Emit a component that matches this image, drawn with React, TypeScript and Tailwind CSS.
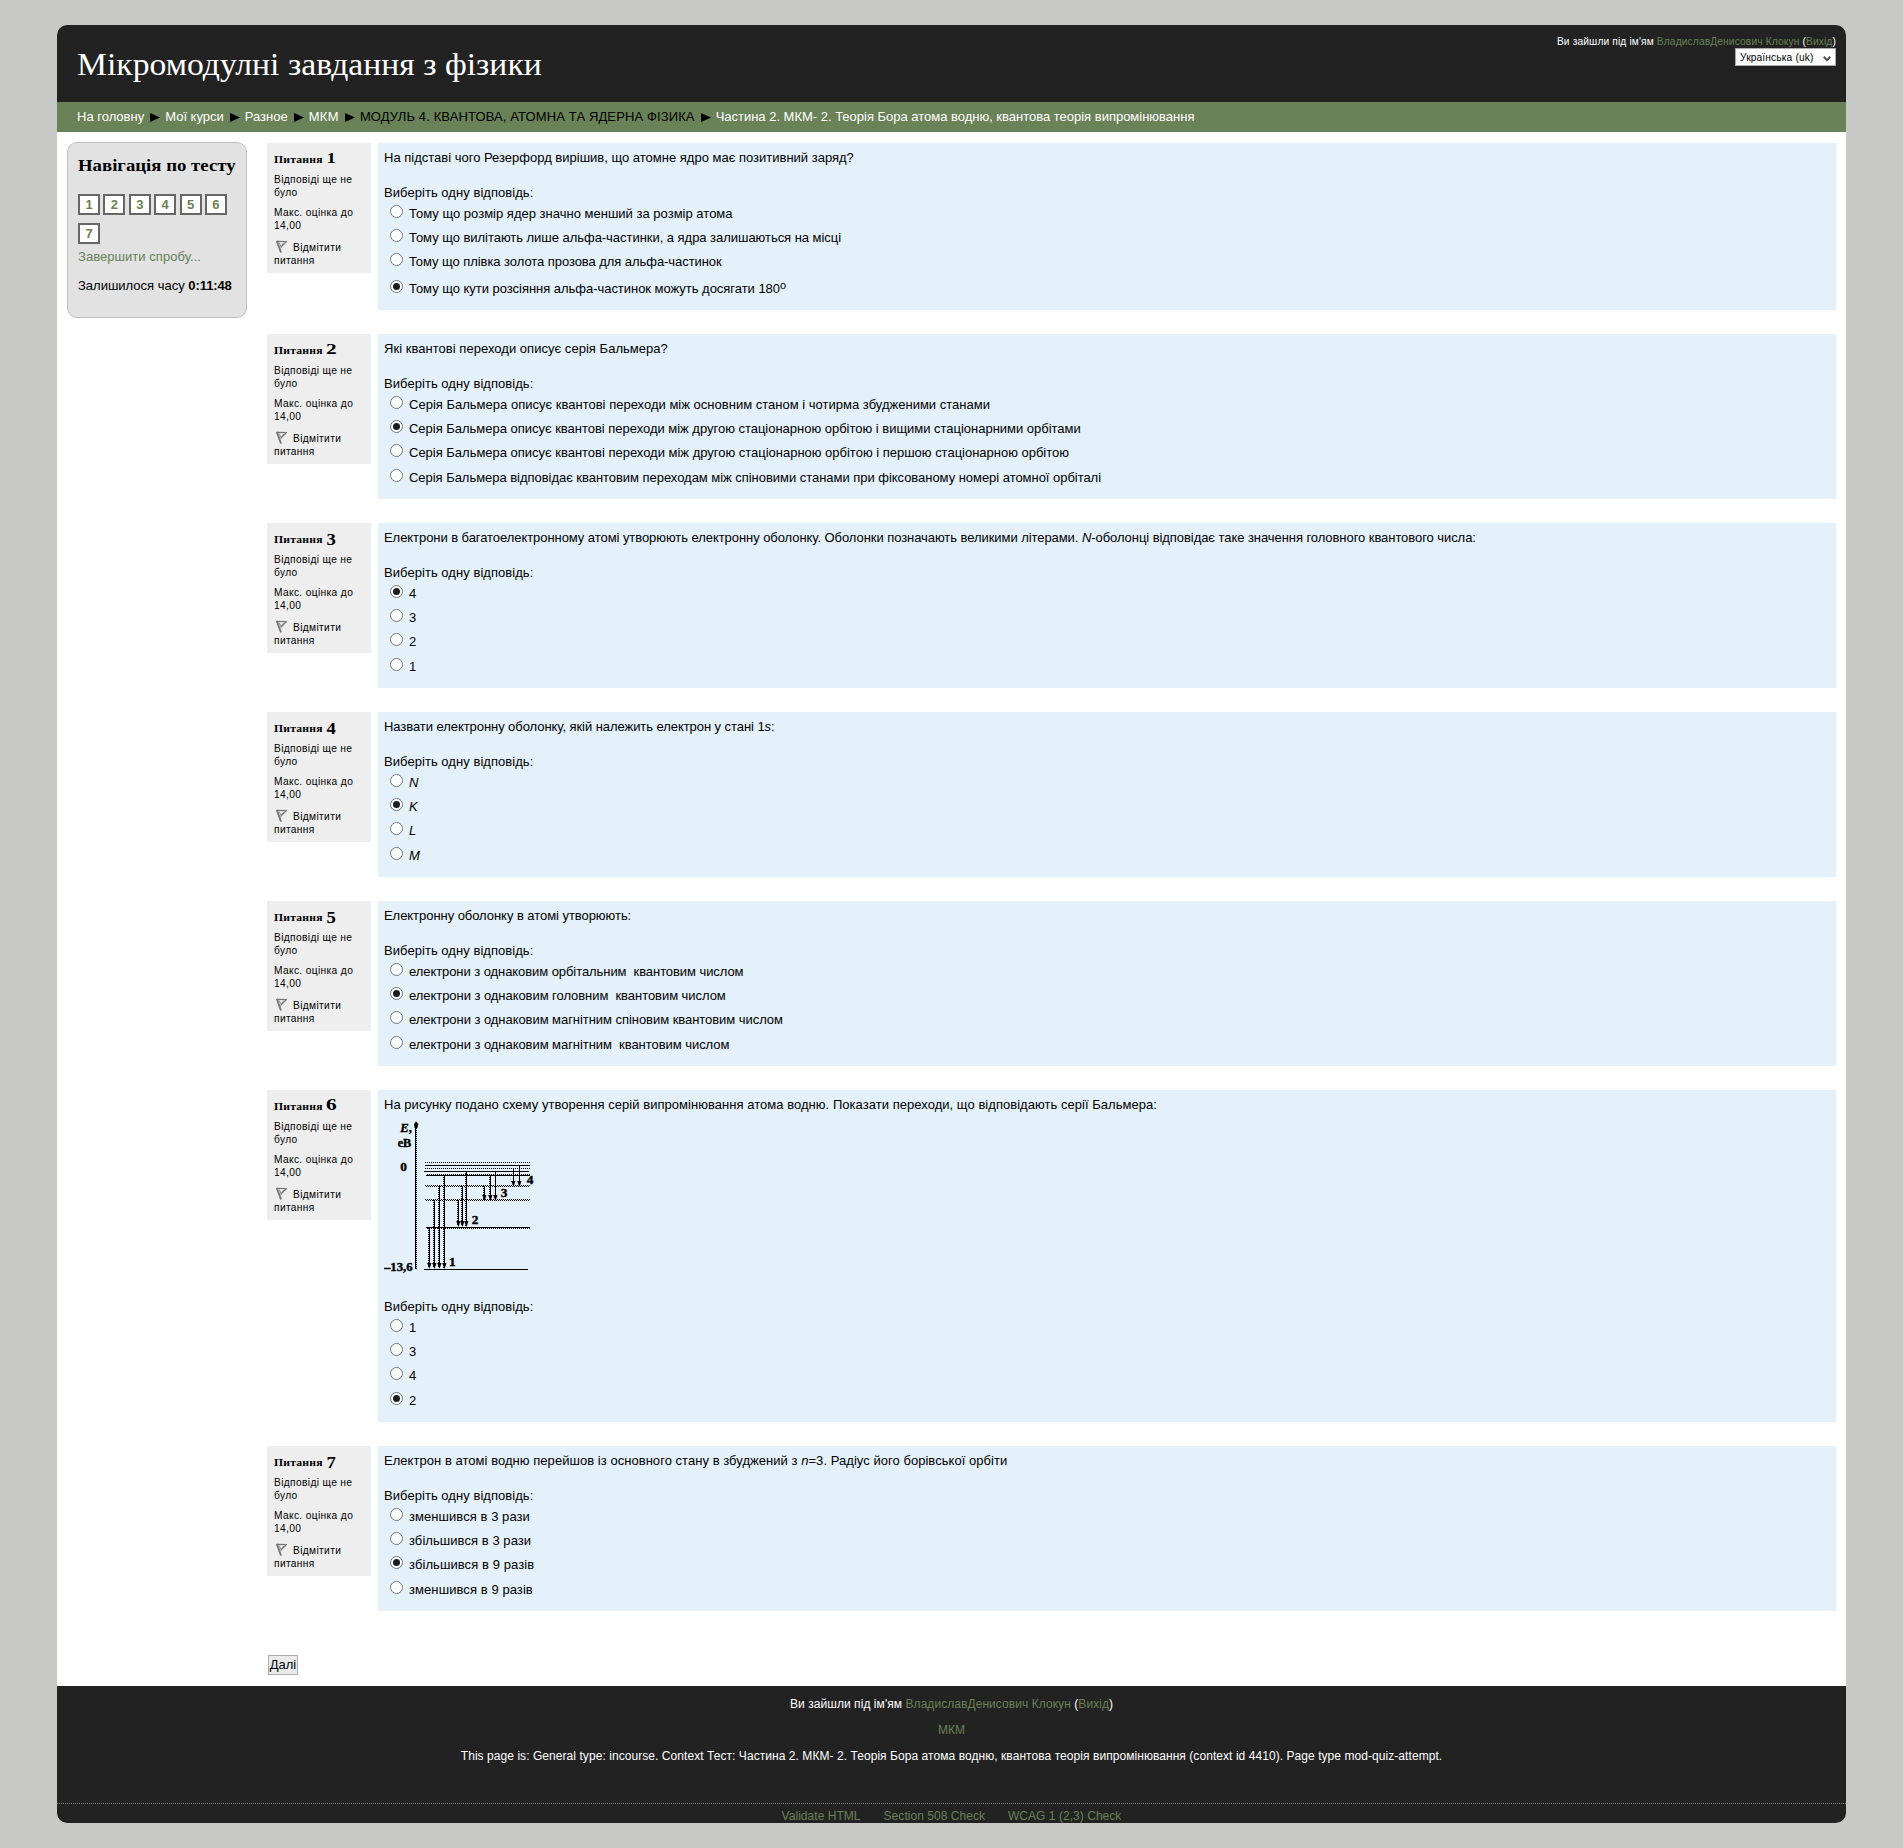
import type { ReactNode } from "react";

type Option = { text: ReactNode; tracking?: string };
type Question = {
  n: number;
  text: ReactNode;
  tracking?: string;
  options: Option[];
  checked: number;
  figure?: boolean;
  lastGap?: string;
};

const questions: Question[] = [
  {
    n: 1,
    text: "На підставі чого Резерфорд вирішив, що атомне ядро має позитивний заряд?",
    options: [
      { text: "Тому що розмір ядер значно менший за розмір атома", tracking: "tracking-[0.01px]" },
      { text: "Тому що вилітають лише альфа-частинки, а ядра залишаються на місці", tracking: "tracking-[-0.037px]" },
      { text: "Тому що плівка золота прозова для альфа-частинок", tracking: "tracking-[-0.06px]" },
      {
        text: (
          <>
            Тому що кути розсіяння альфа-частинок можуть досягати 180
            <span className="relative -top-[4px] text-[11px] leading-none">o</span>
          </>
        ),
        tracking: "tracking-[-0.03px]",
      },
    ],
    checked: 3,
    lastGap: "mt-[3px]",
  },
  {
    n: 2,
    text: "Які квантові переходи описує серія Бальмера?",
    tracking: "tracking-[0.035px]",
    options: [
      { text: "Серія Бальмера описує квантові переходи між основним станом і чотирма збудженими станами", tracking: "tracking-[0.01px]" },
      { text: "Серія Бальмера описує квантові переходи між другою стаціонарною орбітою і вищими стаціонарними орбітами", tracking: "tracking-[-0.018px]" },
      { text: "Серія Бальмера описує квантові переходи між другою стаціонарною орбітою і першою стаціонарною орбітою", tracking: "tracking-[-0.012px]" },
      { text: "Серія Бальмера відповідає квантовим переходам між спіновими станами при фіксованому номері атомної орбіталі", tracking: "tracking-[-0.036px]" },
    ],
    checked: 1,
  },
  {
    n: 3,
    text: (
      <>
        Електрони в багатоелектронному атомі утворюють електронну оболонку. Оболонки позначають великими літерами. <i>N</i>
        -оболонці відповідає таке значення головного квантового числа:
      </>
    ),
    tracking: "tracking-[-0.062px]",
    options: [{ text: "4" }, { text: "3" }, { text: "2" }, { text: "1" }],
    checked: 0,
  },
  {
    n: 4,
    text: (
      <>
        Назвати електронну оболонку, якій належить електрон у стані 1<i>s</i>:
      </>
    ),
    tracking: "tracking-[-0.062px]",
    options: [{ text: <i>N</i> }, { text: <i>K</i> }, { text: <i>L</i> }, { text: <i>M</i> }],
    checked: 1,
  },
  {
    n: 5,
    text: "Електронну оболонку в атомі утворюють:",
    tracking: "tracking-[-0.05px]",
    options: [
      { text: "електрони з однаковим орбітальним\u00a0 квантовим числом", tracking: "tracking-[-0.07px]" },
      { text: "електрони з однаковим головним\u00a0 квантовим числом", tracking: "tracking-[-0.05px]" },
      { text: "електрони з однаковим магнітним спіновим квантовим числом", tracking: "tracking-[-0.05px]" },
      { text: "електрони з однаковим магнітним\u00a0 квантовим числом", tracking: "tracking-[-0.05px]" },
    ],
    checked: 1,
  },
  {
    n: 6,
    text: "На рисунку подано схему утворення серій випромінювання атома водню. Показати переходи, що відповідають серії Бальмера:",
    tracking: "tracking-[0.04px]",
    options: [{ text: "1" }, { text: "3" }, { text: "4" }, { text: "2" }],
    checked: 3,
    figure: true,
  },
  {
    n: 7,
    text: (
      <>
        Електрон в атомі водню перейшов із основного стану в збуджений з <i>n</i>=3. Радіус його борівської орбіти
      </>
    ),
    tracking: "tracking-[0.042px]",
    options: [
      { text: "зменшився в 3 рази", tracking: "tracking-[0.06px]" },
      { text: "збільшився в 3 рази", tracking: "tracking-[0.06px]" },
      { text: "збільшився в 9 разів", tracking: "tracking-[0.08px]" },
      { text: "зменшився в 9 разів", tracking: "tracking-[0.08px]" },
    ],
    checked: 2,
  },
];

/* Old-style numerals: 1 and 2 sit at x-height, 3, 4, 5 and 7 drop below the baseline. */
const numeralShape: Record<number, string> = {
  1: "origin-[50%_79%] scale-x-110 scale-y-[0.8]",
  2: "origin-[50%_79%] scale-x-125 scale-y-[0.82]",
  3: "translate-y-[2px] scale-x-110",
  4: "translate-y-[2px] scale-x-110",
  5: "translate-y-[2px] scale-x-110",
  6: "scale-x-125",
  7: "translate-y-[2px] scale-x-110",
};

function Flag() {
  return (
    <svg className="ml-[2px] mr-[6px] inline-block h-[13px] w-[11px] align-[-2px]" viewBox="0 0 11 13" fill="none" stroke="#777">
      <path d="M0.8 0.8 L5 12.5" strokeWidth="1.9" />
      <path d="M1 1.3 L10.3 1.6 L4.6 7.6" strokeWidth="1.2" />
      <path d="M3.2 2.5 L5 6.4 L7.8 2.8" strokeWidth="0.8" />
    </svg>
  );
}

const levels: [number, number, number, boolean][] = [
  [165, 232.5, 480, true],
  [165, 241.5, 480, false],
  [165, 250.5, 480, true],
  [162, 259.5, 477, false],
  [168, 271.5, 480, false],
  [171, 268.5, 480, true],
  [165, 301.5, 480, true],
  [168, 304.5, 480, true],
  [165, 343.5, 480, true],
  [168, 346.5, 480, true],
  [168, 427.5, 480, false],
  [171, 430.5, 480, true],
  [162, 553.5, 474, false],
];

const arrows: [number, number, number, boolean][] = [
  [178.5, 430, 549, true],
  [193.5, 346, 549, true],
  [208.5, 304, 549, true],
  [223.5, 271, 549, true],
  [265.5, 346, 423, true],
  [277.5, 304, 423, true],
  [289.5, 259, 423, true],
  [343.5, 304, 345, true],
  [361.5, 271, 345, true],
  [376.5, 259, 345, false],
  [430.5, 250, 303, false],
  [448.5, 241, 303, false],
];

function LevelsFigure() {
  return (
    <svg className="mt-[5px] block h-[158px] w-[150px]" viewBox="42 99 450 474" shapeRendering="crispEdges">
      <path d="M136.5 553 V120" stroke="#000" strokeWidth="3" />
      <path d="M139.5 553 V120" stroke="#000" strokeWidth="3" strokeDasharray="3 3" />
      <path d="M138 109 L145 118 L142 129 H134 L132 118 Z" shapeRendering="auto" />
      {levels.map(([x1, y, x2, dotted]) => (
        <path key={y} d={`M${x1} ${y} H${x2}`} stroke="#000" strokeWidth="3" strokeDasharray={dotted ? "3 3" : undefined} />
      ))}
      {arrows.map(([x, y1, y2, dotted]) => (
        <g key={x}>
          <path d={`M${x} ${y1} V${y2}`} stroke="#000" strokeWidth="3" />
          {dotted && <path d={`M${x - 3} ${y1} V${y2}`} stroke="#000" strokeWidth="3" strokeDasharray="3 3" />}
          <path d={`M${x - 7} ${y2 - 15} H${x + 6} L${x} ${y2 + 3} Z`} shapeRendering="auto" />
        </g>
      ))}
      <g fontFamily="'Liberation Serif', serif" fontWeight="700" fontSize="40" stroke="#000" strokeWidth="1.2">
        <text x="91" y="140" fontStyle="italic" fontSize="38" textLength="36">E,</text>
        <text x="83" y="187" fontSize="36" textLength="41" lengthAdjust="spacingAndGlyphs">eB</text>
        <text x="91" y="257">0</text>
        <text x="42" y="558" fontSize="38" textLength="86" lengthAdjust="spacingAndGlyphs">–13,6</text>
        <text x="237" y="543">1</text>
        <text x="305" y="417">2</text>
        <text x="392" y="336">3</text>
        <text x="470" y="297">4</text>
      </g>
    </svg>
  );
}

function Radio({ on }: { on: boolean }) {
  return (
    <span className="ml-[6px] mr-[6px] flex h-[13px] w-[13px] shrink-0 items-center justify-center rounded-full border border-[#757575] bg-white">
      {on && <span className="h-[7px] w-[7px] rounded-full bg-[#1c1c1c]" />}
    </span>
  );
}

function QuestionBlock({ q }: { q: Question }) {
  const height = q.figure ? "h-[332px]" : q.n === 1 ? "h-[167px]" : "h-[165px]";
  return (
    <div className="mb-6 flex items-start gap-[7px]">
      <div className="h-[130px] w-[104px] shrink-0 bg-[#eeeeee] pl-[7px] pt-[6px] text-[10.2px] leading-[13px] tracking-[0.36px]">
        <h3 className="flex h-[20px] items-baseline font-['Liberation_Serif',serif] text-[11px] font-bold leading-[17px] tracking-[0.2px]">
          <span className="w-[53px]"><span className="inline-block origin-left scale-x-[1.06]">Питання</span></span>
          <span className={`inline-block text-[17px] leading-[17px] ${numeralShape[q.n]}`}>{q.n}</span>
        </h3>
        <p className="mt-[4px] whitespace-nowrap">Відповіді ще не<br />було</p>
        <p className="mt-[7px] whitespace-nowrap">Макс. оцінка до<br />14,00</p>
        <p className="mt-[8px] whitespace-nowrap"><Flag />Відмітити<br />питання</p>
      </div>
      <div className={`flex-1 bg-[#e4f1fa] pl-[6px] pt-[6px] leading-[17px] ${height}`}>
        <p className={`whitespace-nowrap ${q.tracking ?? ""}`}>{q.text}</p>
        {q.figure && <LevelsFigure />}
        <p className={`tracking-[0.05px] ${q.figure ? "mt-[22px]" : "mt-[18px]"}`}>Виберіть одну відповідь:</p>
        {q.options.map((o, i) => (
          <label key={i} className={`flex h-6 items-start pt-1 ${i === 3 ? q.lastGap ?? "mt-px" : ""}`}>
            <Radio on={q.checked === i} />
            <span className={`whitespace-nowrap ${o.tracking ?? ""}`}>{o.text}</span>
          </label>
        ))}
      </div>
    </div>
  );
}

function Arrow() {
  return (
    <svg className="ml-[6px] mr-[5px] mt-[5px] h-[9px] w-[10px] shrink-0" viewBox="0 0 10 9">
      <path d="M0 0 L10 4.5 L0 9 Z" />
    </svg>
  );
}

const green = "text-[#698155]";

export default function App() {
  return (
    <div className="h-[1848px] w-[1903px] bg-[#c8c8c6] pl-[57px] pt-[25px] font-['Liberation_Sans',Arial,sans-serif] text-[13px] text-black">
      <div className="flex h-[1798px] w-[1789px] flex-col overflow-hidden rounded-[10px] bg-white">
        <header className="flex h-[77px] shrink-0 justify-between bg-[#222222] pl-5 pr-[10px] text-white">
          <h1 className="origin-left scale-x-[1.052] pt-[19px] font-['Liberation_Serif',serif] text-[32px] leading-[40px]">Мікромодулні завдання з фізики</h1>
          <div className="flex flex-col items-end pt-[10px] text-[10.2px] leading-[13px] tracking-[0.14px]">
            <p>Ви зайшли під ім'ям <a className={green}>ВладиславДенисович Клокун</a> (<a className={green}>Вихід</a>)</p>
            <div className="flex h-[18px] w-[101px] items-center justify-between border border-[#a9a9a9] bg-white pl-1 pr-1 text-black">
              <span>Українська (uk)</span>
              <svg className="mt-[3px] h-[6px] w-[8px]" viewBox="0 0 8 6" fill="none" stroke="#555" strokeWidth="2"><path d="M0.8 0.8 L4 4.2 L7.2 0.8" /></svg>
            </div>
          </div>
        </header>

        <nav className="flex h-[30px] shrink-0 bg-[#6a8257] pl-5 pt-[6px] leading-[17px] text-white">
          <a>На головну</a><Arrow />
          <a>Мої курси</a><Arrow />
          <a>Разное</a><Arrow />
          <a className="tracking-[0.3px]">МКМ</a><Arrow />
          <span className="tracking-[0.12px] text-black">МОДУЛЬ 4. КВАНТОВА, АТОМНА ТА ЯДЕРНА ФІЗИКА</span><Arrow />
          <a className="tracking-[-0.01px]">Частина 2. МКМ- 2. Теорія Бора атома водню, квантова теорія випромінювання</a>
        </nav>

        <div className="flex h-[1554px] shrink-0">
          <aside className="ml-[10px] mt-[10px] h-[176px] w-[180px] shrink-0 rounded-[10px] border border-[#bfbfbf] bg-[#e2e2e2] pl-[10px]">
            <h2 className="mt-[12px] w-[150px] origin-left scale-x-[1.105] whitespace-nowrap font-['Liberation_Serif',serif] text-[17px] font-bold leading-[22px]">Навігація по тесту</h2>
            <div className="mt-[17px] flex flex-wrap gap-x-[3.4px] gap-y-[8px]">
              {[1, 2, 3, 4, 5, 6, 7].map((n) => (
                <a key={n} className={`flex h-[21px] w-[22px] items-center justify-center border-2 border-[#666] bg-white font-bold leading-none ${green}`}>{n}</a>
              ))}
            </div>
            <a className={`mt-[4px] block leading-[17px] tracking-[0.05px] ${green}`}>Завершити спробу...</a>
            <p className="mt-[12px] whitespace-nowrap leading-[17px]">Залишилося часу <b className="tracking-[-0.1px]">0:11:48</b></p>
          </aside>

          <main className="ml-5 w-[1569px] pt-[11px]">
            {questions.map((q) => <QuestionBlock key={q.n} q={q} />)}
            <button className="ml-px mt-[44px] flex h-[20px] w-[30px] items-center justify-center border border-[#adadad] bg-[#ebebeb]">Далі</button>
          </main>
        </div>

        <footer className="flex flex-1 flex-col items-center bg-[#222222] pt-[9px] text-[12px] leading-[18px] text-white">
          <p className="tracking-[0.06px]">Ви зайшли під ім'ям <a className={green}>ВладиславДенисович Клокун</a> (<a className={green}>Вихід</a>)</p>
          <p className="mt-[8px]"><a className={green}>МКМ</a></p>
          <p className="mt-[8px] tracking-[0.06px]">This page is: General type: incourse. Context Тест: Частина 2. МКМ- 2. Теорія Бора атома водню, квантова теорія випромінювання (context id 4410). Page type mod-quiz-attempt.</p>
          <div className={`mt-[38px] flex w-full justify-center gap-[23px] border-t border-dotted border-[#888] pt-[3px] tracking-[0.04px] ${green}`}>
            <a>Validate HTML</a>
            <a>Section 508 Check</a>
            <a>WCAG 1 (2,3) Check</a>
          </div>
        </footer>
      </div>
    </div>
  );
}
